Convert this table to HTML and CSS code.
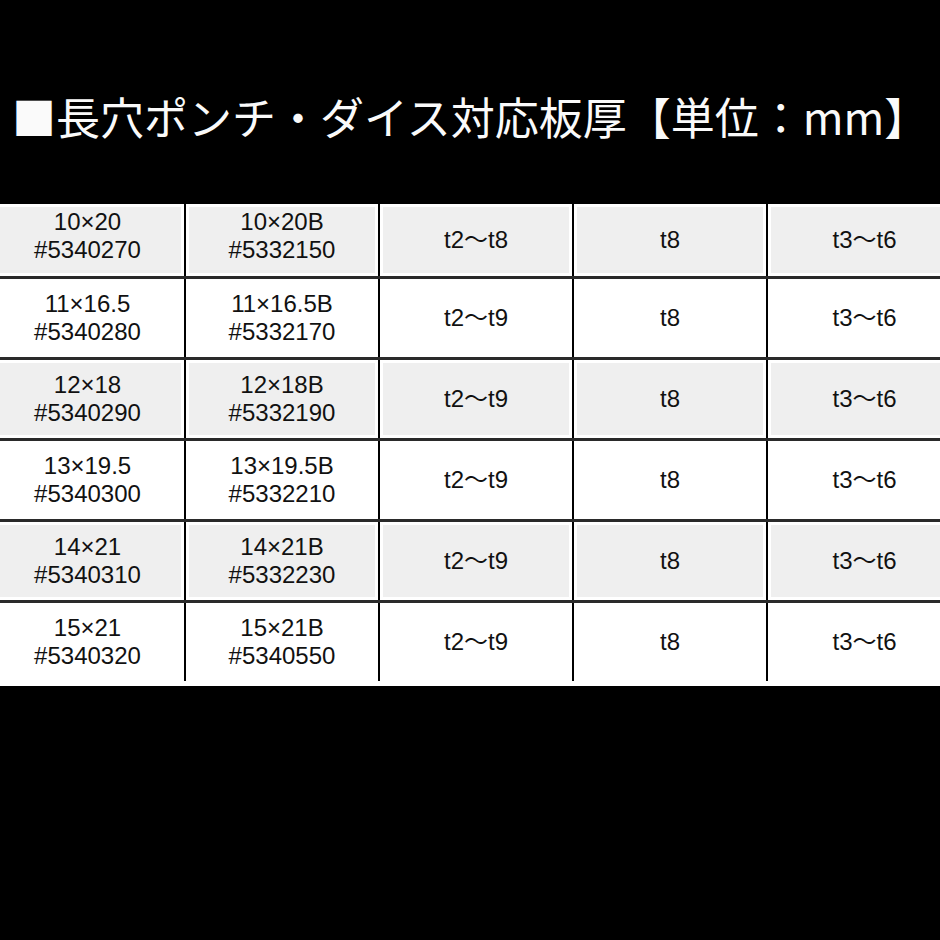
FILE: index.html
```html
<!DOCTYPE html>
<html lang="ja">
<head>
<meta charset="utf-8">
<title>長穴ポンチ・ダイス対応板厚</title>
<link rel="stylesheet" href="styles.css">
</head>
<body>
<div class="page">
  <h1 class="title">■長穴ポンチ・ダイス対応板厚【単位：mm】</h1>
  <table class="spec">
    <colgroup><col class="c"><col class="c"><col class="c"><col class="c"><col class="c"></colgroup>
    <tbody>
      <tr class="gray first"><td class="two">10×20<br>#5340270</td><td class="two">10×20B<br>#5332150</td><td>t2〜t8</td><td>t8</td><td>t3〜t6</td></tr>
      <tr class="white"><td>11×16.5<br>#5340280</td><td>11×16.5B<br>#5332170</td><td>t2〜t9</td><td>t8</td><td>t3〜t6</td></tr>
      <tr class="gray"><td>12×18<br>#5340290</td><td>12×18B<br>#5332190</td><td>t2〜t9</td><td>t8</td><td>t3〜t6</td></tr>
      <tr class="white"><td>13×19.5<br>#5340300</td><td>13×19.5B<br>#5332210</td><td>t2〜t9</td><td>t8</td><td>t3〜t6</td></tr>
      <tr class="gray"><td>14×21<br>#5340310</td><td>14×21B<br>#5332230</td><td>t2〜t9</td><td>t8</td><td>t3〜t6</td></tr>
      <tr class="white"><td>15×21<br>#5340320</td><td>15×21B<br>#5340550</td><td>t2〜t9</td><td>t8</td><td>t3〜t6</td></tr>
    </tbody>
  </table>
  <div class="strip"></div>
</div>
</body>
</html>
```
FILE: styles.css
```css
html, body {
  margin: 0;
  padding: 0;
  background: #000;
}
.page {
  width: 940px;
  height: 940px;
  overflow: hidden;
  background: #000;
}
.title {
  margin: 0;
  box-sizing: border-box;
  height: 204px;
  padding: 86px 0 0 12px;
  font-family: "Noto Sans CJK JP", "Noto Sans", sans-serif;
  font-weight: 400;
  font-size: 44px;
  line-height: 60px;
  color: #fafafa;
  white-space: nowrap;
}
.spec {
  margin-left: -9px;
  border-collapse: collapse;
  table-layout: fixed;
  width: 970px;
  font-family: "Liberation Sans", "Noto Sans CJK JP", sans-serif;
  font-size: 24px;
  line-height: 28px;
  color: #111;
}
.spec .c {
  width: 194px;
}
.spec td {
  padding: 0;
  text-align: center;
  vertical-align: middle;
  border-left: 2px solid #000;
  border-top: 3px solid #2a2a2a;
  height: 78px;
}
.spec td:first-child {
  border-left: none;
}
.spec tr.first td {
  border-top: none;
  height: 72px;
}
.spec tr.first td.two {
  height: 64px;
  padding-bottom: 8px;
}
.spec tr.gray td {
  background: #efefef;
  box-shadow: inset 0 0 0 3px #fff;
}
.spec tr.white td {
  background: #fff;
}
.strip {
  width: 940px;
  height: 5px;
  background: #fff;
}
```
